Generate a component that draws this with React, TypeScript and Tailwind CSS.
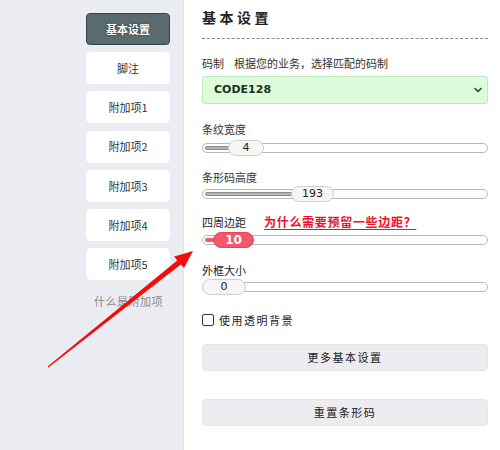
import { ChevronDown } from "lucide-react";

const sideItems = ["基本设置", "脚注", "附加项1", "附加项2", "附加项3", "附加项4", "附加项5"];

const font = { fontFamily: '"Noto Sans CJK SC", "DejaVu Sans", sans-serif' };

function Slider({
  value,
  thumbLeft,
  thumbWidth,
  active,
}: {
  value: string;
  thumbLeft: number;
  thumbWidth: number;
  active?: boolean;
}) {
  return (
    <div className="relative h-[16px]">
      <div className="absolute left-0 right-0 top-[3px] h-[10px] rounded-full border border-[#b9b9b9] bg-white">
        <div
          className={
            active
              ? "absolute left-[2px] top-[2px] h-[4px] rounded-full bg-[#f0596b]"
              : "absolute left-[2px] top-[2px] h-[4px] rounded-full border border-[#8d8d8d] bg-[#b5b5b5]"
          }
          style={{ width: thumbLeft + 6 }}
        />
      </div>
      <div
        className={
          active
            ? "absolute top-0 flex h-[16px] items-center justify-center rounded-full border border-[#e44455] bg-[#f5566a] text-[12px] font-bold text-white"
            : "absolute top-0 flex h-[16px] items-center justify-center rounded-full border border-[#cfcfcf] bg-[#f6f6f6] text-[11px] text-[#222]"
        }
        style={{ left: thumbLeft, width: thumbWidth, fontFamily: '"DejaVu Sans", sans-serif' }}
      >
        {value}
      </div>
    </div>
  );
}

export default function App() {
  return (
    <div className="relative flex h-[450px] w-[500px] overflow-hidden bg-white" style={font}>
      <aside className="flex w-[184px] shrink-0 flex-col items-end border-r border-[#e2e3ea] bg-[#ebecf1] pr-[13px] pt-[13px]">
        {sideItems.map((item, i) => (
          <div
            key={item}
            className={
              i === 0
                ? "mb-[7.2px] flex h-[32px] w-[84px] items-center justify-center rounded-[4px] border border-[#34464b] bg-[#5a6b70] text-[11px] font-bold text-white [text-shadow:0_0_2px_#1e2a2d]"
                : "mb-[7.2px] flex h-[32px] w-[84px] items-center justify-center rounded-[5px] bg-white text-[11px] text-[#333]"
            }
          >
            {item}
          </div>
        ))}
        <div className="mr-[7px] mt-[6px] text-[11px] tracking-[0.5px] text-[#888]">什么是附加项</div>
      </aside>

      <main className="flex flex-1 flex-col pl-[18px] pr-[12px]">
        <h1 className="mt-[7px] text-[14px] font-bold leading-[20px] tracking-[3.5px] text-[#222]">基本设置</h1>
        <div className="mt-[11px] border-t border-dashed border-[#8a8a8a]" />

        <div className="mt-[16px] flex text-[11px] leading-[16px] text-[#333]">
          <span>码制</span>
          <span className="ml-[10px]">根据您的业务，选择匹配的码制</span>
        </div>
        <div className="mt-[5px] flex h-[28px] items-center justify-between rounded-[3px] border border-[#bfe8bf] bg-[#dcfcdc] pl-[11px] pr-[3px]">
          <span className="text-[11px] font-bold text-[#17331a]" style={{ fontFamily: '"DejaVu Sans", sans-serif' }}>
            CODE128
          </span>
          <ChevronDown size={12} strokeWidth={3.5} color="#1d5c24" />
        </div>

        <div className="mt-[17px] text-[11px] leading-[16px] text-[#333]">条纹宽度</div>
        <div className="mt-[3px]">
          <Slider value="4" thumbLeft={26} thumbWidth={36} />
        </div>

        <div className="mt-[13px] text-[11px] leading-[16px] text-[#333]">条形码高度</div>
        <div className="mt-[1px]">
          <Slider value="193" thumbLeft={89} thumbWidth={43} />
        </div>

        <div className="mt-[12px] flex items-center text-[11px] leading-[16px]">
          <span className="text-[#222]">四周边距</span>
          <span className="ml-[18px] text-[12px] font-bold tracking-[0.7px] text-[#f0102b] underline underline-offset-[2px]">
            为什么需要预留一些边距？
          </span>
        </div>
        <div className="mt-[2px]">
          <Slider value="10" thumbLeft={11} thumbWidth={41} active />
        </div>

        <div className="mt-[14px] text-[11px] leading-[16px] text-[#222]">外框大小</div>
        <div className="mt-[1px]">
          <Slider value="0" thumbLeft={0} thumbWidth={44} />
        </div>

        <label className="mt-[17px] flex items-center text-[11px] leading-[16px] tracking-[1.5px] text-[#222]">
          <span className="h-[12px] w-[12px] rounded-[2px] border border-[#333] bg-white" />
          <span className="ml-[5px]">使用透明背景</span>
        </label>

        <button className="mt-[16px] h-[27px] rounded-[4px] border border-[#e4e4ea] bg-[#ebebf0] text-[11px] tracking-[1.5px] text-[#222]">
          更多基本设置
        </button>
        <button className="mt-[28px] h-[27px] rounded-[4px] border border-[#e4e4ea] bg-[#ebebf0] text-[11px] tracking-[1.5px] text-[#222]">
          重置条形码
        </button>
      </main>

      <svg className="pointer-events-none absolute left-0 top-0" width="500" height="450" viewBox="0 0 500 450">
        <polygon
          points="47.6,366.6 177.2,260.6 174.2,256.4 193,251 184,268 180.8,264.4 48.4,367.4"
          fill="#f20d0d"
        />
      </svg>
    </div>
  );
}
